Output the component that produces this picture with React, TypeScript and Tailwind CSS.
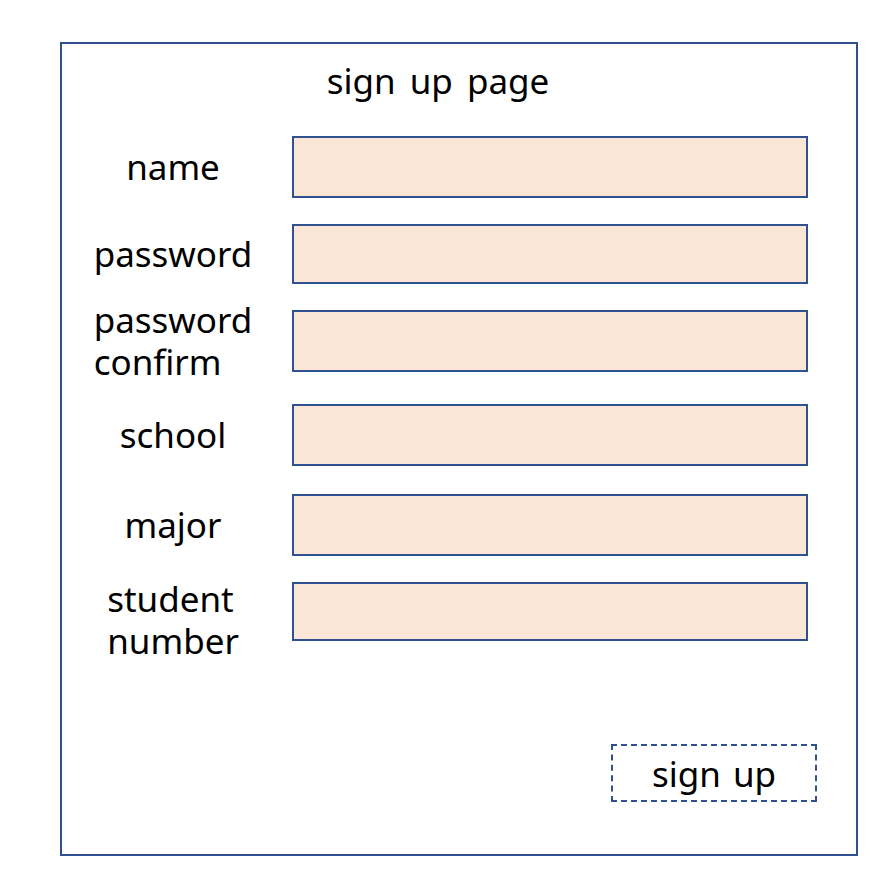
import React from 'react';

interface Field {
  label: string[];
  rowClass: string;
  labelClass: string;
}

const fields: Field[] = [
  { label: ['name'], rowClass: 'mt-[33px] h-[62px]', labelClass: '' },
  { label: ['password'], rowClass: 'mt-[26px] h-[60px]', labelClass: '' },
  { label: ['password', 'confirm'], rowClass: 'mt-[26px] h-[62px]', labelClass: '' },
  { label: ['school'], rowClass: 'mt-[32px] h-[62px]', labelClass: '' },
  { label: ['major'], rowClass: 'mt-[28px] h-[62px]', labelClass: '' },
  { label: ['student', 'number'], rowClass: 'mt-[26px] h-[59px]', labelClass: 'translate-y-[8px]' },
];

export default function App() {
  return (
    <div className="w-[890px] h-[886px] bg-white pt-[42px] pl-[60px] font-['Noto_Sans',sans-serif] text-black">
      <div className="w-[798px] h-[814px] border-2 border-[#2f528f] pt-[15px] flex flex-col">
        <h1 className="h-[44px] leading-[44px] text-[35px] text-center pr-[42px] [word-spacing:5px]">sign up page</h1>

        {fields.map((f, i) => (
          <div key={i} className={`flex items-stretch gap-[8px] ${f.rowClass}`}>
            <div className="w-[222px] flex items-center justify-center">
              <div className={`text-left text-[35px] leading-[42px] whitespace-nowrap ${f.labelClass}`}>
                {f.label.map((line) => (
                  <div key={line}>{line}</div>
                ))}
              </div>
            </div>
            <div className="w-[516px] bg-[#fbe5d6] border-2 border-[#2f528f]" />
          </div>
        ))}

        <div className="flex justify-end mt-[103px] pr-[39px]">
          <button className="w-[206px] h-[58px] border-2 border-dashed border-[#2f528f] text-[35px] leading-none [word-spacing:3px] flex items-center justify-center">
            sign up
          </button>
        </div>
      </div>
    </div>
  );
}
